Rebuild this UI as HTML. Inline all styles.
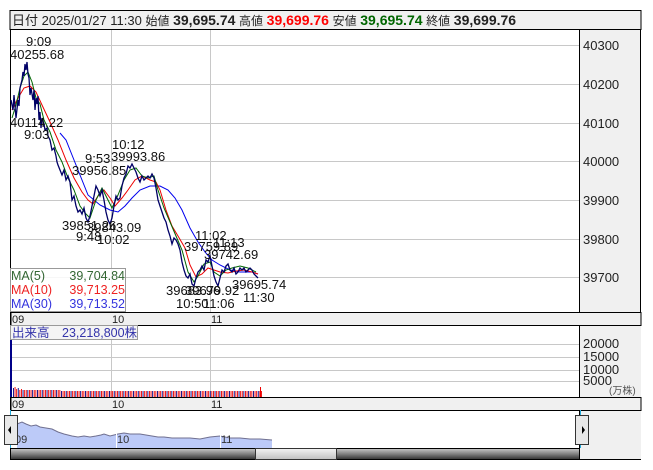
<!DOCTYPE html>
<html><head><meta charset="utf-8"><style>
html,body{margin:0;padding:0;background:#fff;width:653px;height:470px;overflow:hidden}
svg{display:block;font-family:"Liberation Sans","Noto Sans CJK JP",sans-serif}
</style></head><body>
<svg width="653" height="470" viewBox="0 0 653 470">
<defs>
<linearGradient id="sb" x1="0" y1="0" x2="0" y2="1"><stop offset="0" stop-color="#c8c8c8"/><stop offset="0.5" stop-color="#808080"/><stop offset="1" stop-color="#303030"/></linearGradient>
<linearGradient id="th" x1="0" y1="0" x2="0" y2="1"><stop offset="0" stop-color="#f4f4f4"/><stop offset="1" stop-color="#c0c0c0"/></linearGradient>
</defs>
<rect x="10" y="10.5" width="631" height="19" fill="#f0f0f0" stroke="#000"/>
<text x="12" y="25" font-size="13" fill="#222">日付 2025/01/27 11:30 <tspan font-size="12">始値</tspan> <tspan font-weight="bold" font-size="14">39,695.74</tspan> <tspan font-size="12">高値</tspan> <tspan font-weight="bold" font-size="14" fill="#ff0000">39,699.76</tspan> <tspan font-size="12">安値</tspan> <tspan font-weight="bold" font-size="14" fill="#006600">39,695.74</tspan> <tspan font-size="12">終値</tspan> <tspan font-weight="bold" font-size="14">39,699.76</tspan></text>
<rect x="579" y="29.5" width="62" height="283" fill="#f0f0f0"/>
<rect x="10.5" y="29.5" width="630" height="430" fill="none" stroke="#000"/>
<line x1="579.5" y1="29" x2="579.5" y2="312" stroke="#000"/>
<g stroke="#c8c8c8" stroke-width="1">
<line x1="11" y1="45.5" x2="579" y2="45.5"/><line x1="11" y1="84.5" x2="579" y2="84.5"/><line x1="11" y1="123.5" x2="579" y2="123.5"/><line x1="11" y1="161.5" x2="579" y2="161.5"/><line x1="11" y1="200.5" x2="579" y2="200.5"/><line x1="11" y1="239.5" x2="579" y2="239.5"/><line x1="11" y1="277.5" x2="579" y2="277.5"/>
<line x1="111.5" y1="30" x2="111.5" y2="312"/><line x1="210.5" y1="30" x2="210.5" y2="312"/>
</g>
<g font-size="13" fill="#222">
<text x="583" y="50">40300</text><text x="583" y="89">40200</text><text x="583" y="128">40100</text><text x="583" y="166">40000</text><text x="583" y="205">39900</text><text x="583" y="244">39800</text><text x="583" y="282">39700</text>
</g>
<polyline fill="none" stroke="#0000ee" stroke-width="1" points="60,133 66,140 72,155 80,175 88,195 100,205 110,210 118,212 125,206 132,198 140,190 150,186 160,186 168,190 175,198 182,210 190,228 198,242 205,252 212,260 220,265 230,270 240,272 252,272 258,274"/>
<polyline fill="none" stroke="#ee0000" stroke-width="1" points="12,110 18,98 24,88 30,86 36,92 42,105 50,122 58,140 66,160 74,178 82,192 88,200 93,204 98,196 104,190 110,198 115,206 122,198 128,190 135,180 142,176 150,180 156,182 160,190 166,210 172,226 178,236 185,248 190,265 196,277 202,274 208,268 214,270 220,272 228,273 236,271 244,270 252,272 258,274"/>
<polyline fill="none" stroke="#006600" stroke-width="1" points="12,118 16,105 20,88 24,76 28,72 32,82 36,98 40,104 44,120 50,132 56,150 62,162 68,178 74,190 80,206 86,214 90,218 96,200 102,188 108,200 112,208 118,195 124,180 130,170 136,168 142,176 148,178 154,176 158,190 164,208 170,222 176,236 182,250 188,272 194,282 198,276 204,264 210,262 214,272 220,276 226,270 232,268 240,266 248,268 256,272"/>
<polyline fill="none" stroke="#000066" stroke-width="1.3" points="11,100 13,110 14,95 16,118 18,100 19,106 20,88 22,80 23,72 24,76 25,64 26,70 27,62 28,74 29,78 30,95 31,88 33,100 34,90 35,110 36,98 37,104 38,96 39,120 40,112 41,128 42,118 44,124 45,130 47,128 48,136 50,140 52,150 54,148 56,156 57,162 58,165 60,170 62,175 64,170 66,180 68,176 70,182 72,200 74,196 76,206 78,212 80,210 82,214 84,208 86,218 88,222 90,216 92,206 94,196 96,186 98,190 100,196 102,190 104,200 106,212 108,220 110,224 112,218 114,206 116,196 118,200 120,198 122,186 124,178 126,174 128,166 130,168 132,164 134,168 136,172 138,178 140,182 142,176 144,180 146,178 148,176 150,178 152,174 154,178 156,188 158,200 160,206 162,212 164,218 166,222 168,230 170,236 172,244 174,238 176,240 178,244 180,250 182,262 184,270 186,276 188,278 190,274 192,284 194,286 196,278 198,272 200,270 202,266 204,270 206,260 208,262 210,256 212,266 214,276 216,282 218,286 220,278 222,270 224,272 226,266 228,264 230,270 232,272 234,268 236,274 238,272 240,268 242,270 244,268 246,272 248,270 250,268 252,270 254,274 256,276 258,278"/>
<g font-size="13" fill="#111">
<text x="26" y="46">9:09</text><text x="10" y="59">40255.68</text>
<text x="10" y="127">40114.22</text><text x="24" y="139">9:03</text>
<text x="112" y="149">10:12</text><text x="111" y="161">39993.86</text>
<text x="85" y="163">9:53</text><text x="72" y="175">39956.85</text>
<text x="62" y="230">39851.26</text><text x="87" y="232">39843.09</text>
<text x="76" y="241">9:48</text><text x="97" y="244">10:02</text>
<text x="195" y="240">11:02</text><text x="213" y="247">11:13</text>
<text x="184" y="251">39759.89</text><text x="204" y="259">39742.69</text>
<text x="166" y="295">39683.96</text><text x="185" y="295">39679.92</text>
<text x="232" y="289">39695.74</text>
<text x="176" y="308">10:50</text><text x="203" y="308">11:06</text><text x="243" y="302">11:30</text>
</g>
<rect x="10.5" y="268.5" width="115" height="43" fill="#fff" fill-opacity="0.85" stroke="#999"/>
<g font-size="12.5">
<text x="11" y="280" fill="#336633">MA(5)</text><text x="125" y="280" fill="#336633" text-anchor="end">39,704.84</text>
<text x="11" y="294" fill="#ee2222">MA(10)</text><text x="125" y="294" fill="#ee2222" text-anchor="end">39,713.25</text>
<text x="11" y="308" fill="#3333dd">MA(30)</text><text x="125" y="308" fill="#3333dd" text-anchor="end">39,713.52</text>
</g>
<rect x="11" y="312.5" width="630" height="13" fill="#f0f0f0" stroke="#000"/>
<g font-size="11" fill="#222"><text x="12" y="323">09</text><text x="112" y="323">10</text><text x="211" y="323">11</text></g>
<rect x="579" y="326" width="62" height="71" fill="#f0f0f0"/>
<line x1="579.5" y1="325" x2="579.5" y2="397" stroke="#000"/>
<g stroke="#c8c8c8"><line x1="11" y1="344.5" x2="579" y2="344.5"/><line x1="11" y1="357.5" x2="579" y2="357.5"/><line x1="11" y1="370.5" x2="579" y2="370.5"/><line x1="11" y1="381.5" x2="579" y2="381.5"/><line x1="111.5" y1="326" x2="111.5" y2="397"/><line x1="210.5" y1="326" x2="210.5" y2="397"/></g>
<g font-size="13" fill="#222"><text x="583" y="348">20000</text><text x="583" y="361">15000</text><text x="583" y="374">10000</text><text x="583" y="385">5000</text><text x="609" y="394" font-size="10" fill="#555">(万株)</text></g>
<rect x="10" y="340" width="2" height="57" fill="#000088"/>
<g id="vb"></g>
<rect x="10.5" y="325.5" width="127" height="14" fill="#f4f4f4" stroke="#999"/>
<text x="12" y="337" font-size="12.5" fill="#3333aa">出来高　23,218,800株</text>
<rect x="11" y="397.5" width="630" height="13" fill="#f0f0f0" stroke="#000"/>
<line x1="10" y1="397.5" x2="579" y2="397.5" stroke="#000"/>
<g font-size="11" fill="#222"><text x="12" y="408">09</text><text x="112" y="408">10</text><text x="211" y="408">11</text></g>
<rect x="579" y="411" width="62" height="48" fill="#f0f0f0"/>
<polygon fill="#bccaf8" stroke="none" points="17,448 17,424 22,422 26,424 31,426 36,425 40,427 46,428 52,429 58,432 64,434 72,436 78,437 84,436 90,437 96,436 101,435 104,434 110,436 118,434 124,433 130,434 136,434 140,434 146,435 152,436 158,437 164,437 172,438 180,438 190,438 200,439 210,437 220,436 230,438 240,438 250,439 260,439 272,440 272,448"/>
<polyline fill="none" stroke="#707090" stroke-width="1" points="17,424 22,422 26,424 31,426 36,425 40,427 46,428 52,429 58,432 64,434 72,436 78,437 84,436 90,437 96,436 101,435 104,434 110,436 118,434 124,433 130,434 136,434 140,434 146,435 152,436 158,437 164,437 172,438 180,438 190,438 200,439 210,437 220,436 230,438 240,438 250,439 260,439 272,440"/>
<line x1="116.5" y1="430" x2="116.5" y2="448" stroke="#fff"/><line x1="220.5" y1="432" x2="220.5" y2="448" stroke="#fff"/>
<g font-size="11" fill="#333"><text x="15" y="443">09</text><text x="117" y="443">10</text><text x="221" y="443">11</text></g>
<line x1="579.5" y1="410" x2="579.5" y2="459" stroke="#000"/>
<line x1="10.5" y1="410" x2="10.5" y2="448" stroke="#22aadd"/><line x1="580.5" y1="410" x2="580.5" y2="448" stroke="#22aadd"/>
<rect x="4.5" y="415.5" width="13" height="29" fill="#e8e8e8" stroke="#333"/>
<polygon points="8,430 11,426 11,434" fill="#000"/>
<rect x="575.5" y="415.5" width="13" height="29" fill="#e8e8e8" stroke="#333"/>
<polygon points="585,430 582,426 582,434" fill="#000"/>
<rect x="10.5" y="448.5" width="569" height="11" fill="url(#sb)" stroke="#000"/>
<rect x="255.5" y="448.5" width="81" height="11" fill="url(#th)" stroke="#333"/>
</svg>
<script>
(function(){var g=document.getElementById('vb'),s='';
for(var i=0;i<156;i++){var x=13+i*1.6;var hh=i<6?[9,10,8,9,7,8][i]:(i<30?7:6);s+='<rect x="'+x.toFixed(1)+'" y="'+(397-hh)+'" width="0.9" height="'+hh+'" fill="'+((i*7%3)?'#ee0000':'#000088')+'"/>';}
s+='<rect x="260" y="387" width="1" height="10" fill="#ee0000"/>';
g.innerHTML=s;})();
</script>
</body></html>
